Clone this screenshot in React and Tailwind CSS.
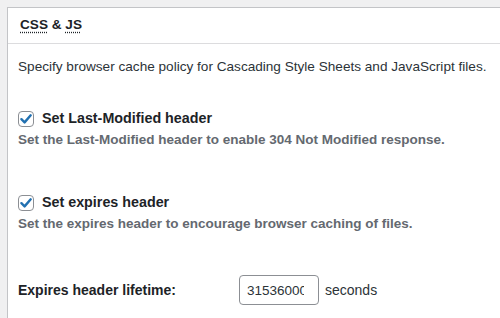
import React from 'react';

const font = { fontFamily: '"Liberation Sans", Arial, sans-serif' };

const Check = () => (
    <span className="flex h-[16px] w-[16px] shrink-0 items-center justify-center rounded-[4px] border border-[#8c8f94] bg-white">
        <svg width="14" height="14" viewBox="0 0 14 14">
            <path d="M2.4 7.2 L5.6 10.4 L11.7 3.3" fill="none" stroke="#2271b1" strokeWidth="2.4" strokeLinecap="round" strokeLinejoin="round" />
        </svg>
    </span>
);

const Option = ({ label, help, className }) => (
    <div className={className}>
        <label className="flex h-[20px] items-center gap-[8px]">
            <Check />
            <span className="text-[14.3px] font-bold text-[#1d2327]">{label}</span>
        </label>
        <p className="mt-[1px] h-[20px] text-[13.5px] font-semibold leading-[20px] text-[#646970]">{help}</p>
    </div>
);

export default function App() {
    return (
        <div className="h-[318px] w-[500px] overflow-hidden bg-[#f0f0f1] pl-[7px] pt-[7px]" style={font}>
            <div className="h-[400px] w-[600px] border-l border-t border-[#c3c4c7] bg-white">
                <div className="flex h-[36px] items-center border-b border-[#dcdcde] px-[12px]">
                    <h3 className="text-[13.6px] font-bold text-[#1d2327]">
                        <abbr className="underline decoration-dotted underline-offset-[3px]">CSS</abbr> &amp;{' '}
                        <abbr className="underline decoration-dotted underline-offset-[3px]">JS</abbr>
                    </h3>
                </div>
                <div className="px-[10px]">
                    <p className="mt-[13px] h-[20px] text-[13.6px] leading-[20px] text-[#2c3338]">
                        Specify browser cache policy for Cascading Style Sheets and JavaScript files.
                    </p>
                    <Option
                        className="mt-[32px]"
                        label="Set Last-Modified header"
                        help="Set the Last-Modified header to enable 304 Not Modified response."
                    />
                    <Option
                        className="mt-[43px]"
                        label="Set expires header"
                        help="Set the expires header to encourage browser caching of files."
                    />
                    <div className="mt-[41px] flex h-[30px] items-center">
                        <span className="w-[221px] text-[14px] font-bold text-[#1d2327]">Expires header lifetime:</span>
                        <input
                            type="text"
                            readOnly
                            value="31536000"
                            className="h-[30px] w-[80px] rounded-[4px] border border-[#8c8f94] bg-white pl-[7px] pr-[14px] text-[13.5px] text-[#2c3338] outline-none"
                            style={font}
                        />
                        <span className="ml-[6px] text-[14px] text-[#2c3338]">seconds</span>
                    </div>
                </div>
            </div>
        </div>
    );
}
